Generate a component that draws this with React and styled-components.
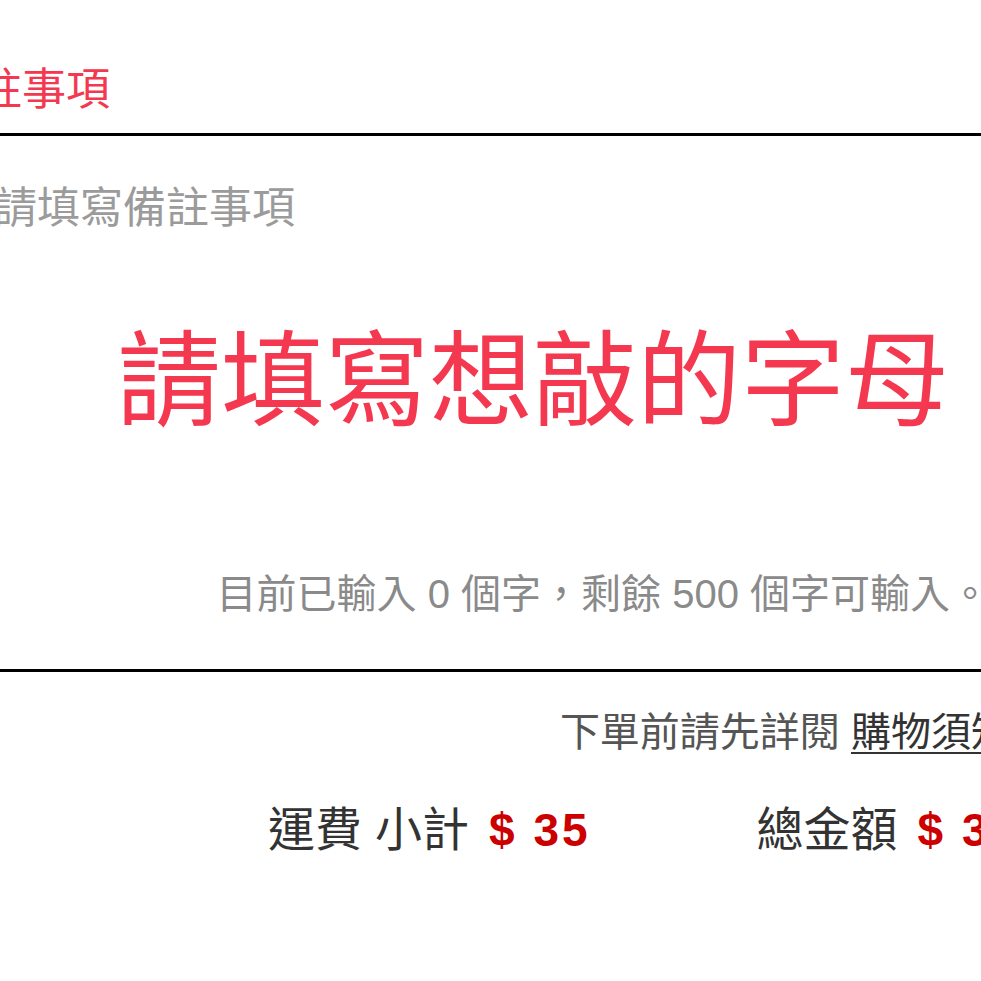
import styled, { createGlobalStyle } from 'styled-components';

const GlobalStyle = createGlobalStyle`
  html, body {
    margin: 0;
    padding: 0;
    background: #ffffff;
    overflow: hidden;
  }
  body {
    font-family: "Liberation Sans", "Noto Sans CJK TC", sans-serif;
  }
`;

const Page = styled.div`
  width: 1080px;
  margin-left: -66px;
`;

const Header = styled.div`
  padding: 57px 0 10px 0;
  border-bottom: 3px solid #000;
`;

const Title = styled.h2`
  margin: 0;
  font-size: 44px;
  font-weight: 400;
  line-height: 66px;
  color: #f3384f;
`;

const Editor = styled.div`
  padding: 0 24px 50px 60px;
  border-bottom: 3px solid #000;
`;

const Placeholder = styled.div`
  padding-top: 42px;
  font-size: 43px;
  line-height: 60px;
  color: #9b9b9b;
`;

const Warning = styled.div`
  margin-top: 79px;
  padding-left: 123px;
  font-size: 104px;
  line-height: 130px;
  color: #f3384f;
`;

const Counter = styled.div`
  margin-top: 122px;
  text-align: right;
  font-size: 40px;
  line-height: 50px;
  color: #8a8a8a;
  white-space: nowrap;
`;

const Notice = styled.div`
  padding: 32px 3px 0 0;
  text-align: right;
  font-size: 40px;
  line-height: 56px;
  color: #555555;
  white-space: nowrap;
`;

const NoticeLink = styled.a`
  color: #333333;
  text-decoration: underline;
  text-underline-offset: 6px;
  text-decoration-thickness: 2px;
`;

const Totals = styled.div`
  display: flex;
  align-items: baseline;
  gap: 166px;
  padding: 38px 0 0 334px;
  white-space: nowrap;
`;

const TotalItem = styled.div`
  display: flex;
  align-items: baseline;
  gap: 20px;
  font-size: 47px;
  line-height: 64px;
  color: #333333;
`;

const Price = styled.span`
  font-family: "Liberation Sans", Arial, sans-serif;
  font-weight: 700;
  font-size: 46px;
  letter-spacing: 3px;
  color: #cc0000;
`;

export default function App() {
  return (
    <>
      <GlobalStyle />
      <Page>
        <Header>
          <Title>備註事項</Title>
        </Header>
        <Editor>
          <Placeholder>請填寫備註事項</Placeholder>
          <Warning>請填寫想敲的字母</Warning>
          <Counter>目前已輸入 0 個字，剩餘 500 個字可輸入。</Counter>
        </Editor>
        <Notice>
          下單前請先詳閱 <NoticeLink>購物須知</NoticeLink>
        </Notice>
        <Totals>
          <TotalItem>
            運費 小計 <Price>$ 35</Price>
          </TotalItem>
          <TotalItem>
            總金額 <Price>$ 35</Price>
          </TotalItem>
        </Totals>
      </Page>
    </>
  );
}
